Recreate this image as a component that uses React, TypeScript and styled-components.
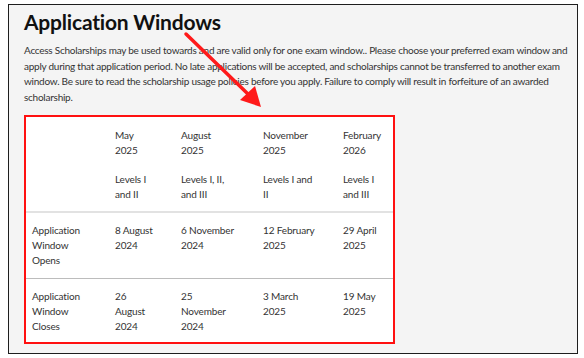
import React from "react"
import styled, { createGlobalStyle } from "styled-components"

const GlobalStyle = createGlobalStyle`
    html, body {
        margin: 0;
        padding: 0;
        background: #fff;
    }
    body {
        font-family: "Lato", "Open Sans", sans-serif;
    }
`

const Page = styled.div`
    padding: 4px 6px 4px 8px;
    width: 584px;
    height: 358px;
    box-sizing: border-box;
`

const Frame = styled.div`
    position: relative;
    width: 570px;
    height: 350px;
    box-sizing: border-box;
    border: 1.5px solid #1e1e1e;
    background: #f4f4f4;
    padding: 4px 5px 0 15px;
`

const Title = styled.h2`
    margin: 0;
    font-size: 21px;
    line-height: 25px;
    font-weight: 700;
    letter-spacing: -0.2px;
    color: #111;
`

const Intro = styled.p`
    margin: 9px 0 0;
    font-size: 10px;
    letter-spacing: -0.25px;
    line-height: 15.5px;
    color: #333;
`

const Schedule = styled.table`
    margin-top: 10px;
    width: 371px;
    table-layout: fixed;
    border-collapse: collapse;
    background: #fff;
    outline: 2px solid #ff1010;
    outline-offset: -2px;
    font-size: 10px;
    letter-spacing: -0.15px;
    line-height: 15px;
    color: #333;
`

const Row = styled.tr<{ $line?: "thick" | "thin" }>`
    border-bottom: ${(p) =>
        p.$line === "thick" ? "2px solid #e2e2e2" : p.$line === "thin" ? "1px solid #bcbcbc" : "none"};
`

const Cell = styled.td<{ $top: number; $bottom: number }>`
    vertical-align: top;
    white-space: nowrap;
    padding: ${(p) => `${p.$top}px 8px ${p.$bottom}px`};
`

const Para = styled.div<{ $gap?: boolean }>`
    margin-top: ${(p) => (p.$gap ? "14px" : "0")};
`

const Arrow = styled.svg`
    position: absolute;
    left: 0;
    top: 0;
    pointer-events: none;
`

const windows = [
    { month: ["May", "2025"], levels: ["Levels I", "and II"], opens: ["8 August", "2024"], closes: ["26", "August", "2024"] },
    { month: ["August", "2025"], levels: ["Levels I, II,", "and III"], opens: ["6 November", "2024"], closes: ["25", "November", "2024"] },
    { month: ["November", "2025"], levels: ["Levels I and", "II"], opens: ["12 February", "2025"], closes: ["3 March", "2025"] },
    { month: ["February", "2026"], levels: ["Levels I", "and III"], opens: ["29 April", "2025"], closes: ["19 May", "2025"] },
]

const Lines: React.FC<{ lines: string[] }> = ({ lines }) => (
    <>
        {lines.map((l, i) => (
            <React.Fragment key={i}>
                {i > 0 && <br />}
                {l}
            </React.Fragment>
        ))}
    </>
)

export default function App() {
    return (
        <>
            <GlobalStyle />
            <Page>
                <Frame>
                    <Title>Application Windows</Title>
                    <Intro>
                        Access Scholarships may be used towards and are valid only for one exam window.. Please choose your preferred exam window and
                        apply during that application period. No late applications will be accepted, and scholarships cannot be transferred to another exam
                        window. Be sure to read the scholarship usage policies before you apply. Failure to comply will result in forfeiture of an awarded
                        scholarship.
                    </Intro>
                    <Schedule>
                        <colgroup>
                            <col style={{ width: 83 }} />
                            <col style={{ width: 66 }} />
                            <col style={{ width: 82 }} />
                            <col style={{ width: 80 }} />
                            <col style={{ width: 60 }} />
                        </colgroup>
                        <tbody>
                            <Row $line="thick">
                                <Cell $top={13} $bottom={9}></Cell>
                                {windows.map((w) => (
                                    <Cell key={w.month[0]} $top={13} $bottom={9}>
                                        <Para>
                                            <Lines lines={w.month} />
                                        </Para>
                                        <Para $gap>
                                            <Lines lines={w.levels} />
                                        </Para>
                                    </Cell>
                                ))}
                            </Row>
                            <Row $line="thin">
                                <Cell $top={10} $bottom={10}>
                                    <Lines lines={["Application", "Window", "Opens"]} />
                                </Cell>
                                {windows.map((w) => (
                                    <Cell key={w.month[0]} $top={10} $bottom={10}>
                                        <Lines lines={w.opens} />
                                    </Cell>
                                ))}
                            </Row>
                            <Row>
                                <Cell $top={10} $bottom={10}>
                                    <Lines lines={["Application", "Window", "Closes"]} />
                                </Cell>
                                {windows.map((w) => (
                                    <Cell key={w.month[0]} $top={10} $bottom={10}>
                                        <Lines lines={w.closes} />
                                    </Cell>
                                ))}
                            </Row>
                        </tbody>
                    </Schedule>
                    <Arrow width="570" height="350" viewBox="0 0 570 350">
                        <line x1="177" y1="29" x2="240" y2="90" stroke="#ff1a1a" strokeWidth="3.5" strokeLinecap="round" />
                        <polygon points="252,102 231,95 246,81" fill="#ff1a1a" />
                    </Arrow>
                </Frame>
            </Page>
        </>
    )
}
